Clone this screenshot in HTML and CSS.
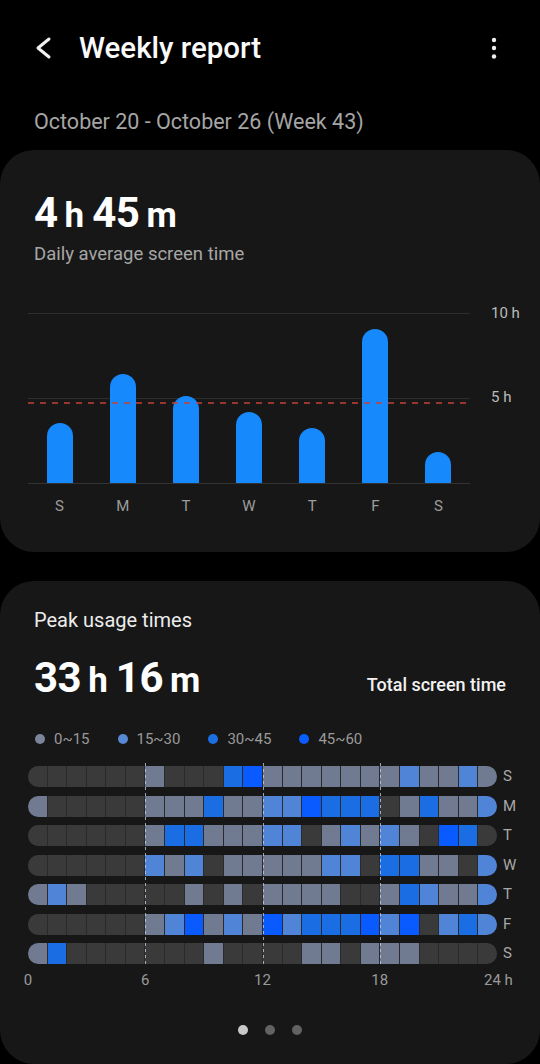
FILE: index.html
```html
<!DOCTYPE html>
<html lang="en">
<head>
<meta charset="utf-8">
<title>Weekly report</title>
<link rel="stylesheet" href="styles.css">
</head>
<body>
<header class="appbar">
  <svg class="back" width="20" height="24" viewBox="0 0 20 24"><path d="M15 3 L4 12 L15 21" fill="none" stroke="#f2f2f2" stroke-width="3" stroke-linecap="round" stroke-linejoin="round"/></svg>
  <h1 class="title">Weekly report</h1>
  <svg class="kebab" width="8" height="24" viewBox="0 0 8 24"><circle cx="4" cy="4" r="2.2" fill="#eee"/><circle cx="4" cy="12" r="2.2" fill="#eee"/><circle cx="4" cy="20.5" r="2.2" fill="#eee"/></svg>
</header>

<div class="range">October 20 - October 26 (Week 43)</div>

<section class="card card-avg">
  <div class="summary">
    <div class="big"><span class="num">4</span><span class="unit">h</span><span class="num">45</span><span class="unit">m</span></div>
    <div class="sub">Daily average screen time</div>
  </div>
  <div class="chart">
    <div class="plot">
      <div class="grid5"></div>
      <div class="slot"><div class="bar" style="height:60px"></div></div>
      <div class="slot"><div class="bar" style="height:109px"></div></div>
      <div class="slot"><div class="bar" style="height:87px"></div></div>
      <div class="slot"><div class="bar" style="height:71px"></div></div>
      <div class="slot"><div class="bar" style="height:55px"></div></div>
      <div class="slot"><div class="bar" style="height:154px"></div></div>
      <div class="slot"><div class="bar" style="height:31px"></div></div>
      <div class="avg"></div>
    </div>
    <div class="yaxis">
      <span class="ylab y10">10 h</span>
      <span class="ylab y5">5 h</span>
    </div>
    <div class="days">
      <span>S</span><span>M</span><span>T</span><span>W</span><span>T</span><span>F</span><span>S</span>
    </div>
  </div>
</section>

<section class="card card-peak">
  <div class="peak-title">Peak usage times</div>
  <div class="peak-head">
    <div class="big"><span class="num">33</span><span class="unit">h</span><span class="num">16</span><span class="unit">m</span></div>
    <div class="total">Total screen time</div>
  </div>
  <div class="legend">
    <span class="lg"><i class="dot a"></i>0~15</span>
    <span class="lg"><i class="dot b"></i>15~30</span>
    <span class="lg"><i class="dot c"></i>30~45</span>
    <span class="lg"><i class="dot e"></i>45~60</span>
  </div>

  <div class="heat">
    <div class="rows">
      <div class="row"><i class="d"></i><i class="d"></i><i class="d"></i><i class="d"></i><i class="d"></i><i class="d"></i><i class="a"></i><i class="d"></i><i class="d"></i><i class="d"></i><i class="c"></i><i class="e"></i><i class="a"></i><i class="a"></i><i class="a"></i><i class="a"></i><i class="a"></i><i class="a"></i><i class="a"></i><i class="b"></i><i class="a"></i><i class="a"></i><i class="b"></i><i class="a"></i></div>
      <div class="row"><i class="a"></i><i class="d"></i><i class="d"></i><i class="d"></i><i class="d"></i><i class="d"></i><i class="a"></i><i class="a"></i><i class="a"></i><i class="c"></i><i class="a"></i><i class="a"></i><i class="b"></i><i class="b"></i><i class="e"></i><i class="c"></i><i class="c"></i><i class="c"></i><i class="d"></i><i class="a"></i><i class="c"></i><i class="a"></i><i class="a"></i><i class="b"></i></div>
      <div class="row"><i class="d"></i><i class="d"></i><i class="d"></i><i class="d"></i><i class="d"></i><i class="d"></i><i class="a"></i><i class="c"></i><i class="c"></i><i class="a"></i><i class="a"></i><i class="a"></i><i class="b"></i><i class="b"></i><i class="d"></i><i class="a"></i><i class="b"></i><i class="a"></i><i class="b"></i><i class="a"></i><i class="d"></i><i class="e"></i><i class="c"></i><i class="d"></i></div>
      <div class="row"><i class="d"></i><i class="d"></i><i class="d"></i><i class="d"></i><i class="d"></i><i class="d"></i><i class="b"></i><i class="a"></i><i class="b"></i><i class="d"></i><i class="a"></i><i class="a"></i><i class="a"></i><i class="a"></i><i class="a"></i><i class="b"></i><i class="b"></i><i class="d"></i><i class="c"></i><i class="c"></i><i class="a"></i><i class="a"></i><i class="d"></i><i class="b"></i></div>
      <div class="row"><i class="a"></i><i class="b"></i><i class="a"></i><i class="d"></i><i class="d"></i><i class="d"></i><i class="d"></i><i class="d"></i><i class="a"></i><i class="d"></i><i class="a"></i><i class="d"></i><i class="a"></i><i class="a"></i><i class="a"></i><i class="a"></i><i class="d"></i><i class="d"></i><i class="a"></i><i class="c"></i><i class="b"></i><i class="a"></i><i class="a"></i><i class="b"></i></div>
      <div class="row"><i class="d"></i><i class="d"></i><i class="d"></i><i class="d"></i><i class="d"></i><i class="d"></i><i class="a"></i><i class="b"></i><i class="e"></i><i class="a"></i><i class="b"></i><i class="a"></i><i class="e"></i><i class="b"></i><i class="c"></i><i class="c"></i><i class="c"></i><i class="e"></i><i class="b"></i><i class="e"></i><i class="d"></i><i class="b"></i><i class="c"></i><i class="b"></i></div>
      <div class="row"><i class="a"></i><i class="c"></i><i class="d"></i><i class="d"></i><i class="d"></i><i class="d"></i><i class="d"></i><i class="d"></i><i class="d"></i><i class="a"></i><i class="d"></i><i class="d"></i><i class="d"></i><i class="d"></i><i class="a"></i><i class="a"></i><i class="d"></i><i class="a"></i><i class="a"></i><i class="a"></i><i class="d"></i><i class="d"></i><i class="d"></i><i class="d"></i></div>
      <span class="vline v6"></span><span class="vline v12"></span><span class="vline v18"></span>
    </div>
    <div class="rlabels">
      <span>S</span><span>M</span><span>T</span><span>W</span><span>T</span><span>F</span><span>S</span>
    </div>
    <div class="xaxis">
      <span class="x0">0</span><span class="x6">6</span><span class="x12">12</span><span class="x18">18</span><span class="x24">24 h</span>
    </div>
  </div>

  <div class="pager"><i class="on"></i><i></i><i></i></div>
</section>
</body>
</html>
```

FILE: styles.css
```css
* { box-sizing: border-box; }
html, body { margin: 0; padding: 0; }
body {
  width: 540px;
  height: 1064px;
  overflow: hidden;
  background: #000;
  color: #fff;
  font-family: Roboto, "Noto Sans", "Liberation Sans", sans-serif;
}

.appbar {
  height: 96px;
  display: flex;
  align-items: center;
  padding: 0 0 0 34px;
}
.back { display: block; margin-right: 25px; }
.title {
  margin: 0;
  font-size: 29.5px;
  font-weight: 500;
  line-height: 32px;
  color: #fafafa;
  flex: 1;
}
.kebab { display: block; margin-right: 42px; margin-top: -1px; }

.range {
  padding: 0 34px;
  margin-top: 13px;
  font-size: 21.5px;
  line-height: 26px;
  color: #a5a5a5;
}

.card {
  background: #171717;
  border-radius: 34px;
  width: 540px;
}
.card-avg {
  margin-top: 15px;
  padding: 39px 0 37px;
}
.summary { padding: 0 34px; }
.big {
  display: flex;
  align-items: baseline;
  line-height: 48px;
  font-weight: 700;
  color: #fff;
}
.big .num { font-size: 42px; letter-spacing: -0.5px; }
.big .unit { font-size: 35px; margin: 0 8px 0 7px; }
.big .unit:last-child { margin-right: 0; }
.sub {
  margin-top: 3px;
  font-size: 18.5px;
  line-height: 22px;
  color: #a6a6a6;
}

.chart {
  margin: 48px 0 0 28px;
  display: grid;
  grid-template-columns: 442px auto;
  column-gap: 21px;
}
.plot {
  position: relative;
  height: 171px;
  border-top: 1px solid #2e2e2e;
  border-bottom: 1px solid #333;
  display: flex;
  align-items: flex-end;
}
.slot {
  flex: 1;
  display: flex;
  justify-content: center;
}
.bar {
  position: relative;
  z-index: 1;
  width: 26px;
  background: #1689fc;
  border-radius: 13px 13px 0 0;
}
.grid5 {
  position: absolute;
  left: 0; right: 0;
  top: 84px;
  height: 1px;
  background: #2e2e2e;
}
.avg {
  position: absolute;
  z-index: 2;
  left: 0; right: 0;
  top: 88px;
  height: 2px;
  background: repeating-linear-gradient(90deg, rgba(196,64,56,0.75) 0 6px, transparent 6px 12px);
}
.yaxis { position: relative; }
.ylab {
  position: absolute;
  left: 0;
  font-size: 15px;
  line-height: 18px;
  color: #bcbcbc;
  white-space: nowrap;
}
.y10 { top: -9px; }
.y5 { top: 75px; }
.days {
  grid-column: 1;
  display: flex;
  margin-top: 13px;
}
.days span {
  flex: 1;
  text-align: center;
  font-size: 15px;
  line-height: 18px;
  color: #9c9c9c;
}

.card-peak {
  margin-top: 29px;
  padding: 27px 0 29px;
}
.peak-title {
  padding: 0 34px;
  font-size: 20px;
  line-height: 24px;
  color: #ececec;
}
.peak-head {
  margin-top: 22px;
  padding: 0 34px;
  display: flex;
  justify-content: space-between;
  align-items: baseline;
}
.total {
  font-size: 18px;
  font-weight: 500;
  color: #f2f2f2;
  position: relative;
  top: -1px;
}
.legend {
  margin-top: 25px;
  padding-left: 35px;
  display: flex;
  gap: 28px;
}
.lg {
  display: flex;
  align-items: center;
  gap: 9px;
  font-size: 15px;
  line-height: 18px;
  color: #9a9a9a;
}
.dot {
  width: 10px;
  height: 10px;
  border-radius: 50%;
}
.dot.a { background: #7c8599; }
.dot.b { background: #5887d3; }
.dot.c { background: #1c6fe2; }
.dot.e { background: #0b5cff; }

.heat {
  margin-top: 18px;
  padding-left: 28px;
  display: grid;
  grid-template-columns: 469px auto;
  column-gap: 6px;
}
.rows {
  position: relative;
  display: flex;
  flex-direction: column;
  gap: 8.5px;
}
.row {
  height: 21px;
  display: flex;
  gap: 1px;
  background: #2a2a2a;
  border-radius: 10.5px;
  overflow: hidden;
}
.row i { flex: 1; display: block; }
.row i.d { background: #3a3a3a; }
.row i.a { background: #707b92; }
.row i.b { background: #4f84d7; }
.row i.c { background: #1a6de2; }
.row i.e { background: #0a5bff; }

.vline {
  position: absolute;
  top: -3px;
  bottom: -3px;
  width: 1px;
  background: repeating-linear-gradient(180deg, rgba(200,210,230,0.75) 0 3px, transparent 3px 6px);
}
.v6 { left: 25%; }
.v12 { left: 50%; }
.v18 { left: 75%; }

.rlabels {
  display: flex;
  flex-direction: column;
  gap: 8.5px;
}
.rlabels span {
  height: 21px;
  line-height: 21px;
  font-size: 15px;
  color: #a8a8a8;
}
.xaxis {
  grid-column: 1 / span 2;
  position: relative;
  height: 18px;
  margin-top: 7px;
  width: 469px;
}
.xaxis span {
  position: absolute;
  top: 0;
  font-size: 15px;
  line-height: 18px;
  color: #9a9a9a;
  transform: translateX(-50%);
  white-space: nowrap;
}
.x0 { left: 0; }
.x6 { left: 25%; }
.x12 { left: 50%; }
.x18 { left: 75%; }
.x24 { left: 100%; transform: translateX(-13px) !important; }

.pager {
  margin-top: 36px;
  display: flex;
  justify-content: center;
  gap: 17px;
}
.pager i {
  width: 10px;
  height: 10px;
  border-radius: 50%;
  background: #626262;
  display: block;
}
.pager i.on { background: #c9c9c9; }
```
